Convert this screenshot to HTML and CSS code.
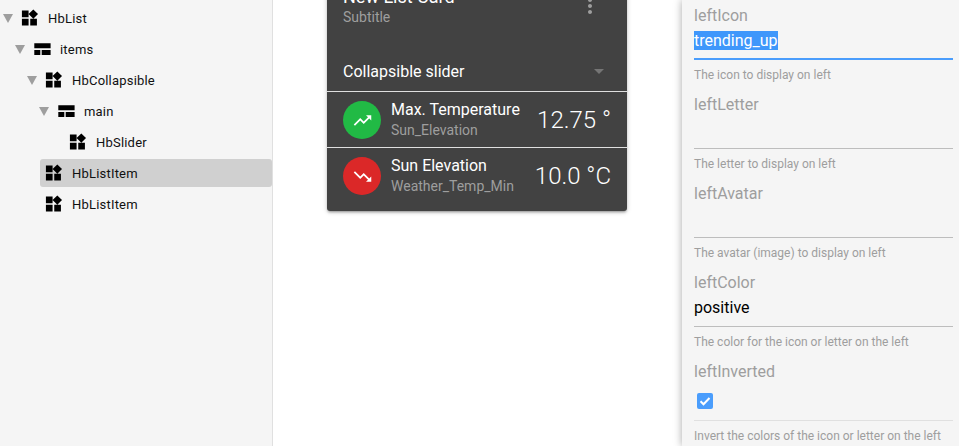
FILE: index.html
```html
<!DOCTYPE html>
<html lang="en">
<head>
<meta charset="utf-8">
<title>HbList editor</title>
<link rel="stylesheet" href="styles.css">
</head>
<body>
<svg class="defs" width="0" height="0" aria-hidden="true">
  <symbol id="widget" viewBox="0 0 24 24"><path d="M13.500 13v8h8v-8h-8zM3.500 21h8v-8h-8v8zM3.500 3v8h8V3h-8zm13.660-1.310L11.500 7.340 17.160 13l5.660-5.660-5.660-5.650z"/></symbol>
  <symbol id="slot" viewBox="0 0 20 20"><path d="M3.300 4.300h16.300v5H3.300zM3.300 11h6v5h-6zM10.700 11h8.900v5h-8.900z"/></symbol>
</svg>
<div class="app">
  <aside class="sidebar">
    <ul class="tree">
      <li>
        <div class="node"><span class="arrow"></span><div class="node-body"><svg class="node-icon"><use href="#widget"/></svg><span>HbList</span></div></div>
        <ul class="tree">
          <li>
            <div class="node"><span class="arrow"></span><div class="node-body"><svg class="node-icon"><use href="#slot"/></svg><span>items</span></div></div>
            <ul class="tree">
              <li>
                <div class="node"><span class="arrow"></span><div class="node-body"><svg class="node-icon"><use href="#widget"/></svg><span>HbCollapsible</span></div></div>
                <ul class="tree">
                  <li>
                    <div class="node"><span class="arrow"></span><div class="node-body"><svg class="node-icon"><use href="#slot"/></svg><span>main</span></div></div>
                    <ul class="tree">
                      <li><div class="node"><span class="arrow arrow-none"></span><div class="node-body"><svg class="node-icon"><use href="#widget"/></svg><span>HbSlider</span></div></div></li>
                    </ul>
                  </li>
                </ul>
              </li>
              <li><div class="node"><span class="arrow arrow-none"></span><div class="node-body node-selected"><svg class="node-icon"><use href="#widget"/></svg><span>HbListItem</span></div></div></li>
              <li><div class="node"><span class="arrow arrow-none"></span><div class="node-body"><svg class="node-icon"><use href="#widget"/></svg><span>HbListItem</span></div></div></li>
            </ul>
          </li>
        </ul>
      </li>
    </ul>
  </aside>

  <main class="stage">
    <section class="card">
      <header class="card-head">
        <div class="card-titles">
          <div class="card-title">New List Card</div>
          <div class="card-subtitle">Subtitle</div>
        </div>
        <svg class="kebab" viewBox="0 0 24 24"><path d="M12 8c1.100 0 2-.9 2-2s-.9-2-2-2-2 .9-2 2 .9 2 2 2zm0 2c-1.100 0-2 .9-2 2s.9 2 2 2 2-.9 2-2-.9-2-2-2zm0 6c-1.100 0-2 .9-2 2s.9 2 2 2 2-.9 2-2-.9-2-2-2z"/></svg>
      </header>
      <div class="collapsible"><span>Collapsible slider</span><span class="caret"></span></div>
      <div class="item">
        <span class="avatar avatar-up"><svg viewBox="0 0 24 24"><path d="M16 6l2.290 2.290-4.880 4.880-4-4L2 16.590 3.410 18l6-6 4 4 6.300-6.290L22 12V6z"/></svg></span>
        <div class="item-text"><div class="item-title">Max. Temperature</div><div class="item-sub">Sun_Elevation</div></div>
        <div class="item-value">12.75 °</div>
      </div>
      <div class="item">
        <span class="avatar avatar-down"><svg viewBox="0 0 24 24"><path d="M16 18l2.290-2.290-4.880-4.880-4 4L2 7.410 3.410 6l6 6 4-4 6.300 6.290L22 12v6z"/></svg></span>
        <div class="item-text"><div class="item-title">Sun Elevation</div><div class="item-sub">Weather_Temp_Min</div></div>
        <div class="item-value">10.0 °C</div>
      </div>
    </section>
  </main>

  <aside class="props">
    <div class="field">
      <div class="field-label">leftIcon</div>
      <div class="field-value field-focus"><span class="selected-text">trending_up</span></div>
      <div class="field-hint">The icon to display on left</div>
    </div>
    <div class="field">
      <div class="field-label">leftLetter</div>
      <div class="field-value"></div>
      <div class="field-hint">The letter to display on left</div>
    </div>
    <div class="field">
      <div class="field-label">leftAvatar</div>
      <div class="field-value"></div>
      <div class="field-hint">The avatar (image) to display on left</div>
    </div>
    <div class="field">
      <div class="field-label">leftColor</div>
      <div class="field-value">positive</div>
      <div class="field-hint">The color for the icon or letter on the left</div>
    </div>
    <div class="field">
      <div class="field-label">leftInverted</div>
      <div class="field-check"><span class="checkbox"><svg viewBox="0 0 16 16"><path d="M3.500 8.300l3 3 6-6.300" /></svg></span></div>
      <div class="field-hint">Invert the colors of the icon or letter on the left</div>
    </div>
  </aside>
</div>
</body>
</html>
```
FILE: styles.css
```css
* { box-sizing: border-box; }
html, body { margin: 0; height: 100%; overflow: hidden; }
body { font-family: Roboto, "Liberation Sans", sans-serif; background: #fff; color: #000; }
.defs { position: absolute; }
.app { display: flex; height: 446px; overflow: hidden; }

.sidebar { width: 273px; flex: none; background: #f5f5f5; border-right: 1px solid #e0e0e0; padding-top: 4px; overflow: hidden; }
.tree { list-style: none; margin: 0; padding: 0; }
.tree .tree { padding-left: 12px; }
.node { display: flex; align-items: center; height: 28px; margin-bottom: 3px; }
.arrow { flex: none; width: 16px; height: 28px; position: relative; }
.arrow::before { content: ""; position: absolute; left: 3px; top: 10px; border-left: 5px solid transparent; border-right: 5px solid transparent; border-top: 9px solid #9e9e9e; }
.arrow-none::before { display: none; }
.node-body { flex: 1; display: flex; align-items: center; height: 28px; padding-left: 3px; font-size: 13px; letter-spacing: .2px; border-radius: 3px; color: #111; }
.node-selected { background: #d0d0d0; }
.node-icon { width: 20px; height: 20px; flex: none; margin-right: 9px; fill: #000; }

.stage { flex: 1; display: flex; justify-content: center; align-items: flex-start; min-width: 0; padding-right: 1px; }
.card { width: 300px; margin-top: -31px; background: #424242; color: #fff; border-radius: 0 0 3px 3px; box-shadow: 0 1px 5px rgba(0,0,0,.2), 0 2px 2px rgba(0,0,0,.14), 0 3px 1px -2px rgba(0,0,0,.12); padding-bottom: 7px; }
.card-head { display: flex; justify-content: space-between; padding: 16px 25px 0 16px; height: 82px; }
.card-title { font-size: 18px; line-height: 24px; }
.card-subtitle { font-size: 14px; line-height: 16px; color: #9e9e9e; }
.kebab { width: 24px; height: 24px; fill: #9e9e9e; margin-top: 9px; }
.collapsible { display: flex; align-items: center; justify-content: space-between; height: 41px; padding: 0 23px 0 16px; font-size: 16px; border-bottom: 1px solid #e0e0e0; }
.caret { width: 0; height: 0; margin-top: 1px; border-left: 5px solid transparent; border-right: 5px solid transparent; border-top: 5px solid #757575; }
.item { display: flex; align-items: center; height: 56px; padding: 0 16px; }
.item + .item { height: 57px; margin-top: -1px; border-top: 1px solid #e0e0e0; }
.avatar { width: 38px; height: 38px; flex: none; border-radius: 50%; display: flex; align-items: center; justify-content: center; margin-right: 10px; }
.avatar svg { width: 21px; height: 21px; fill: #fff; }
.avatar-up { background: #21ba45; }
.avatar-down { background: #db2828; }
.item-text { flex: 1; min-width: 0; padding-bottom: 4px; }
.item-title { font-size: 16px; line-height: 24px; }
.item-sub { font-size: 14px; line-height: 17px; color: #9e9e9e; }
.item-value { font-size: 24px; font-weight: 300; white-space: nowrap; }

.props { width: 277px; flex: none; background: #f5f5f5; padding: 4px 6px 0 12px; box-shadow: 0 0 8px rgba(0,0,0,.35); overflow: hidden; position: relative; }
.field { height: 89px; }
.field-label { font-size: 16px; line-height: 24px; color: #9e9e9e; }
.field-value { height: 32px; padding-top: 1px; font-size: 16px; line-height: 24px; border-bottom: 1px solid #bdbdbd; }
.field-focus { border-bottom-color: #4a9dfc; box-shadow: inset 0 -1px 0 #4a9dfc; }
.selected-text { display: inline-block; background: #3f97fb; color: #fff; line-height: 19px; }
.field-check { height: 37px; padding: 9px 0 0 3px; border-bottom: 1px solid #e0e0e0; }
.checkbox { display: block; width: 16px; height: 16px; border-radius: 2px; background: #4a9dfc; }
.checkbox svg { display: block; width: 16px; height: 16px; fill: none; stroke: #fff; stroke-width: 2; }
.field-hint { margin-top: 6px; font-size: 12px; line-height: 18px; color: #9e9e9e; }
```
